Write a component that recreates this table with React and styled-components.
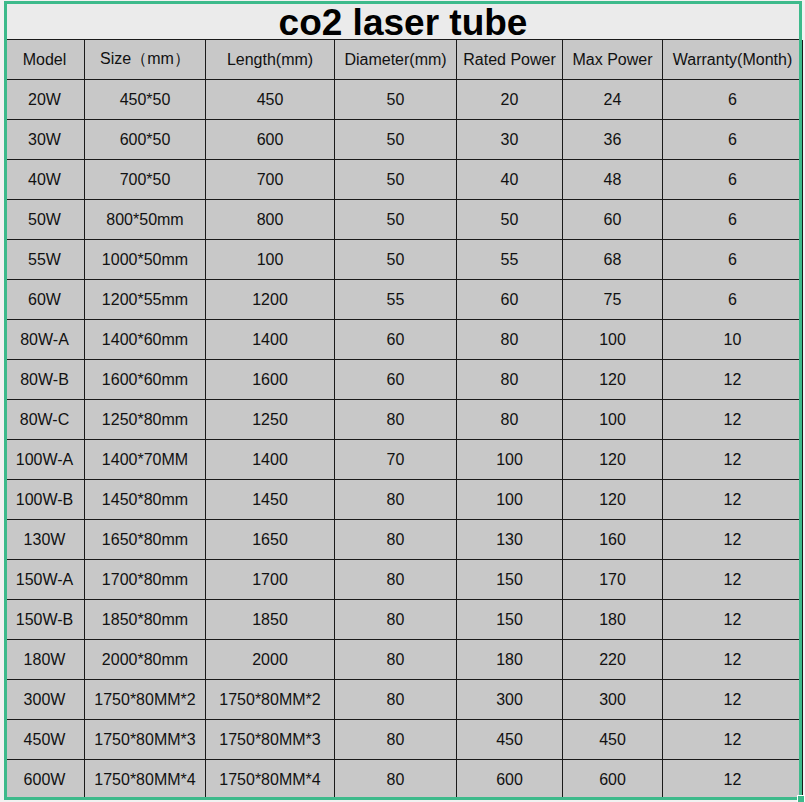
import React from 'react';
import styled, { createGlobalStyle } from 'styled-components';

const GlobalStyle = createGlobalStyle`
  html, body {
    margin: 0;
    padding: 0;
    background: #f2f2f2;
  }
  body {
    font-family: 'Liberation Sans', Arial, sans-serif;
  }
`;

const Page = styled.div`
  width: 805px;
  height: 802px;
  padding: 1px 0 0 4px;
  box-sizing: border-box;
  overflow: hidden;
`;

const Sheet = styled.div`
  width: 798px;
  height: 799px;
  background: #c8c8c8;
  outline: 3px solid #3dba8b;
  outline-offset: -3px;
  position: relative;
`;

const Corner = styled.div`
  position: absolute;
  right: -3px;
  bottom: -3px;
  width: 6px;
  height: 6px;
  background: #3dba8b;
  border: 1px solid #ffffff;
`;

const TitleBar = styled.div`
  height: 39px;
  box-sizing: border-box;
  padding-top: 3px;
  background: #ebebeb;
  border-bottom: 1px solid #1a1a1a;
  font-size: 37px;
  font-weight: 700;
  line-height: 37px;
  text-align: center;
  color: #000000;
`;

const Table = styled.table`
  width: 798px;
  border-collapse: collapse;
  table-layout: fixed;
  color: #111111;
`;

const Cell = styled.td`
  height: 39px;
  padding: 0;
  border: 1px solid #1a1a1a;
  border-top: ${(p) => (p.$first ? 'none' : '1px solid #1a1a1a')};
  font-size: 16px;
  text-align: center;
  vertical-align: middle;
  white-space: nowrap;
  background: #c8c8c8;
`;

const widths = [80, 121, 129, 122, 106, 100, 140];

const header = ['Model', 'Size（mm）', 'Length(mm)', 'Diameter(mm)', 'Rated Power', 'Max Power', 'Warranty(Month)'];

const rows = [
  ['20W', '450*50', '450', '50', '20', '24', '6'],
  ['30W', '600*50', '600', '50', '30', '36', '6'],
  ['40W', '700*50', '700', '50', '40', '48', '6'],
  ['50W', '800*50mm', '800', '50', '50', '60', '6'],
  ['55W', '1000*50mm', '100', '50', '55', '68', '6'],
  ['60W', '1200*55mm', '1200', '55', '60', '75', '6'],
  ['80W-A', '1400*60mm', '1400', '60', '80', '100', '10'],
  ['80W-B', '1600*60mm', '1600', '60', '80', '120', '12'],
  ['80W-C', '1250*80mm', '1250', '80', '80', '100', '12'],
  ['100W-A', '1400*70MM', '1400', '70', '100', '120', '12'],
  ['100W-B', '1450*80mm', '1450', '80', '100', '120', '12'],
  ['130W', '1650*80mm', '1650', '80', '130', '160', '12'],
  ['150W-A', '1700*80mm', '1700', '80', '150', '170', '12'],
  ['150W-B', '1850*80mm', '1850', '80', '150', '180', '12'],
  ['180W', '2000*80mm', '2000', '80', '180', '220', '12'],
  ['300W', '1750*80MM*2', '1750*80MM*2', '80', '300', '300', '12'],
  ['450W', '1750*80MM*3', '1750*80MM*3', '80', '450', '450', '12'],
  ['600W', '1750*80MM*4', '1750*80MM*4', '80', '600', '600', '12'],
];

const App = () => {
  return (
    <Page>
      <GlobalStyle />
      <Sheet>
        <TitleBar>co2 laser tube</TitleBar>
        <Table>
          <colgroup>
            {widths.map((w, i) => (
              <col key={i} style={{ width: w }} />
            ))}
          </colgroup>
          <tbody>
            <tr>
              {header.map((h, i) => (
                <Cell key={i} $first>
                  {h}
                </Cell>
              ))}
            </tr>
            {rows.map((r, ri) => (
              <tr key={ri}>
                {r.map((c, ci) => (
                  <Cell key={ci}>{c}</Cell>
                ))}
              </tr>
            ))}
          </tbody>
        </Table>
        <Corner />
      </Sheet>
    </Page>
  );
};

export default App;
